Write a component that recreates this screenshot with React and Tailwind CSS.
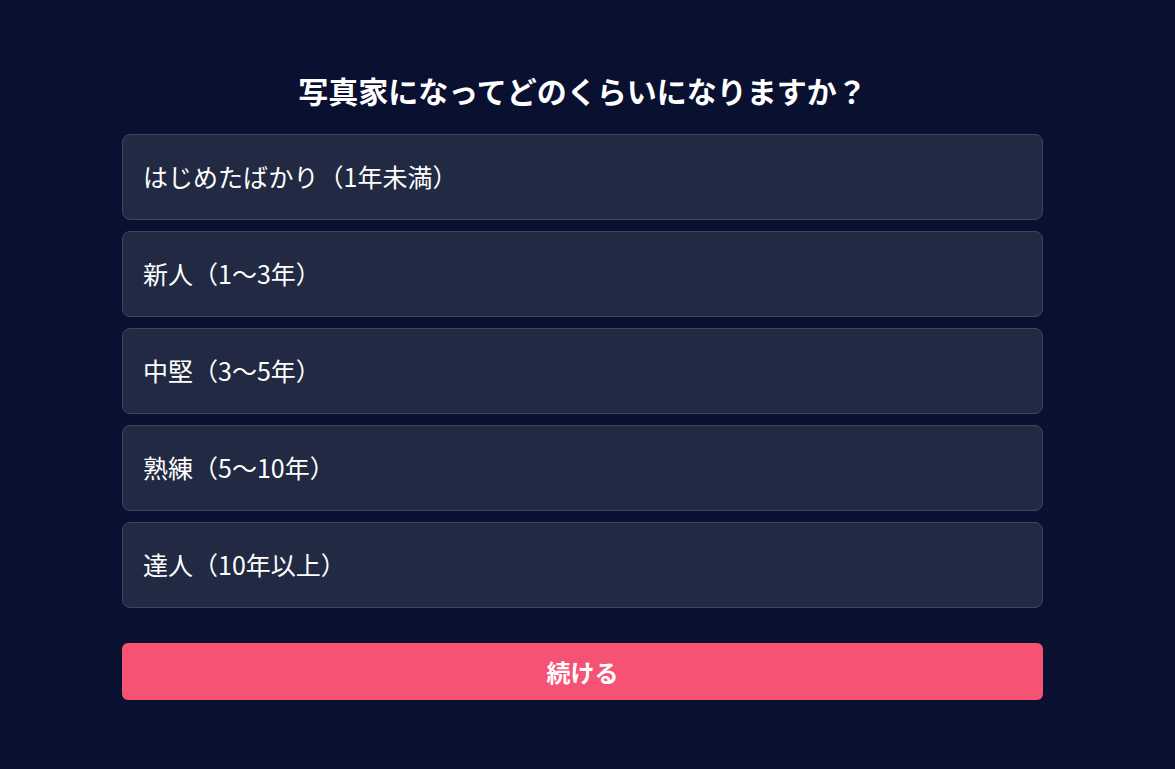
const OPTIONS = [
  'はじめたばかり（1年未満）',
  '新人（1〜3年）',
  '中堅（3〜5年）',
  '熟練（5〜10年）',
  '達人（10年以上）',
];

export default function App() {
  return (
    <div
      className="min-h-screen bg-[#0a1030] text-white"
      style={{ fontFamily: '"Noto Sans CJK JP", "Noto Sans", sans-serif' }}
    >
      <div className="w-[921px] ml-[122px] pt-[70px]">
        <h1 className="text-[30px] leading-[40px] font-bold text-center mb-[24px]">
          写真家になってどのくらいになりますか？
        </h1>
        <div className="flex flex-col gap-[11px]">
          {OPTIONS.map((o) => (
            <button
              key={o}
              className="h-[86px] w-full text-left px-5 text-[25px] font-normal bg-[#212a42] border border-[#3c4662] rounded-lg"
            >
              {o}
            </button>
          ))}
        </div>
        <button className="mt-[35px] w-full h-[57px] rounded-md bg-[#f55274] text-[24px] font-bold">
          続ける
        </button>
      </div>
    </div>
  );
}
